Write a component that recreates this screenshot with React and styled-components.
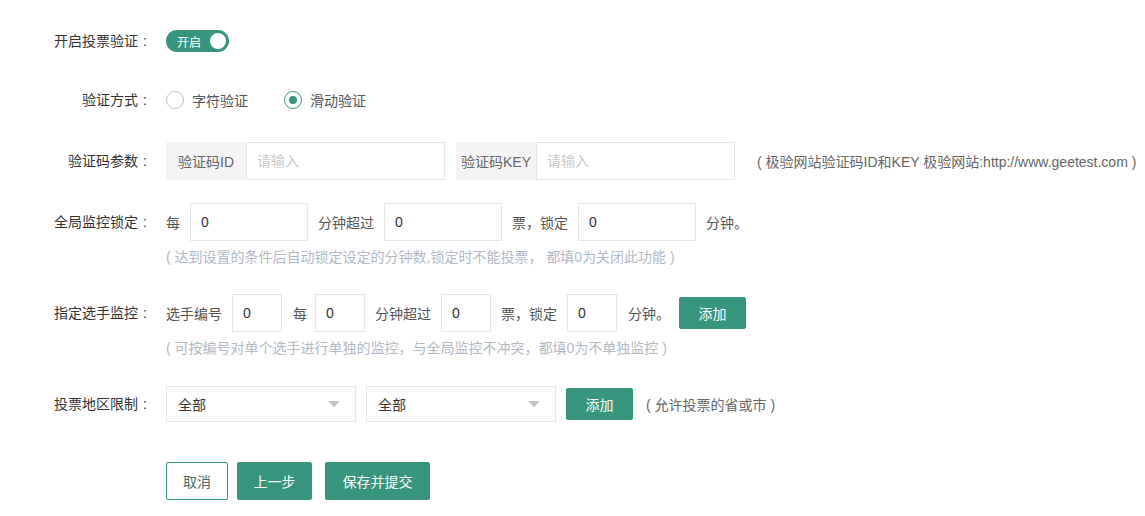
import React from 'react';
import styled, { createGlobalStyle } from 'styled-components';

const GREEN = '#36957c';

const Global = createGlobalStyle`
  html, body { margin: 0; padding: 0; background: #fff; }
  body {
    font-family: 'Liberation Sans', 'Noto Sans CJK SC', sans-serif;
    font-size: 14px;
    color: #333;
  }
  * { box-sizing: border-box; }
`;

const Page = styled.div`
  width: 1145px;
  padding-top: 22px;
`;

const Item = styled.div`
  display: flex;
  margin-bottom: ${p => p.$mb}px;
`;

const Label = styled.div`
  flex: 0 0 147px;
  height: 38px;
  line-height: 38px;
  text-align: right;
  color: #333;
  white-space: nowrap;
`;

const Colon = styled.span`
  padding-left: 5px;
`;

const Body = styled.div`
  margin-left: 19px;
  display: flex;
  flex-direction: column;
`;

const Line = styled.div`
  display: flex;
  align-items: center;
  height: 38px;
  white-space: nowrap;
`;

const Text = styled.span`
  color: #555;
  margin: 0 ${p => p.$mr ?? 10}px 0 ${p => p.$ml ?? 10}px;
`;

const Hint = styled.div`
  margin-top: 6px;
  line-height: 20px;
  color: #b2b9c5;
  white-space: nowrap;
`;

const SideHint = styled.span`
  color: #666;
  margin-left: ${p => p.$ml}px;
  white-space: nowrap;
`;

const Switch = styled.div`
  width: 63px;
  height: 22px;
  border-radius: 11px;
  background: ${GREEN};
  display: flex;
  align-items: center;
  justify-content: space-between;
  padding: 0 3px 0 11px;
  color: #fff;
  font-size: 12px;
`;

const Knob = styled.span`
  width: 16px;
  height: 16px;
  border-radius: 50%;
  background: #fff;
`;

const RadioWrap = styled.label`
  display: flex;
  align-items: center;
  margin-right: 36px;
  color: #555;
`;

const RadioCircle = styled.span`
  width: 18px;
  height: 18px;
  border-radius: 50%;
  border: 1px solid ${p => p.$on ? GREEN : '#c2c2c2'};
  display: flex;
  align-items: center;
  justify-content: center;
  margin-right: 8px;
  &::after {
    content: '';
    width: 8px;
    height: 8px;
    border-radius: 50%;
    background: ${p => p.$on ? GREEN : 'transparent'};
  }
`;

const Group = styled.div`
  display: flex;
  margin-right: ${p => p.$mr || 0}px;
`;

const Addon = styled.span`
  width: 80px;
  height: 38px;
  line-height: 38px;
  background: #f4f4f4;
  color: #666;
  text-align: center;
  border: 1px solid #f4f4f4;
`;

const Input = styled.input`
  width: ${p => p.$w}px;
  height: 38px;
  border: 1px solid #e6e6e6;
  padding: 0 10px;
  font-family: inherit;
  font-size: 14px;
  color: #333;
  outline: none;
  background: #fff;
  &::placeholder { color: #c8c8c8; }
`;

const Select = styled.div`
  width: 190px;
  height: 36px;
  border: 1px solid #e6e6e6;
  display: flex;
  align-items: center;
  justify-content: space-between;
  padding: 0 15px 0 11px;
  color: #333;
  margin-right: ${p => p.$mr || 0}px;
`;

const Caret = styled.span`
  width: 0;
  height: 0;
  border-left: 6px solid transparent;
  border-right: 6px solid transparent;
  border-top: 6px solid #c2c2c2;
`;

const Btn = styled.button`
  height: ${p => p.$h || 38}px;
  width: ${p => p.$w}px;
  padding: 0;
  border-radius: 2px;
  font-family: inherit;
  font-size: 14px;
  background: ${p => p.$plain ? '#fff' : GREEN};
  color: ${p => p.$plain ? '#48675f' : '#fff'};
  border: 1px solid ${GREEN};
  margin-right: ${p => p.$mr || 0}px;
  margin-left: ${p => p.$ml || 0}px;
  cursor: pointer;
`;

const Actions = styled.div`
  display: flex;
  margin-left: 166px;
`;

const L = ({ children }) => (
  <Label>{children}<Colon>:</Colon></Label>
);

export default function App() {
  return (
    <Page>
      <Global />
      <Item $mb={21}>
        <L>开启投票验证</L>
        <Body>
          <Line>
            <Switch>开启<Knob /></Switch>
          </Line>
        </Body>
      </Item>

      <Item $mb={23}>
        <L>验证方式</L>
        <Body>
          <Line>
            <RadioWrap><RadioCircle />字符验证</RadioWrap>
            <RadioWrap><RadioCircle $on />滑动验证</RadioWrap>
          </Line>
        </Body>
      </Item>

      <Item $mb={23}>
        <L>验证码参数</L>
        <Body>
          <Line>
            <Group $mr={11}>
              <Addon>验证码ID</Addon>
              <Input $w={199} placeholder="请输入" />
            </Group>
            <Group>
              <Addon>验证码KEY</Addon>
              <Input $w={199} placeholder="请输入" />
            </Group>
            <SideHint $ml={22}>( 极验网站验证码ID和KEY 极验网站:http://www.geetest.com )</SideHint>
          </Line>
        </Body>
      </Item>

      <Item $mb={27}>
        <L>全局监控锁定</L>
        <Body>
          <Line>
            <Text $ml={0} $mr={10}>每</Text>
            <Input $w={118} defaultValue="0" />
            <Text>分钟超过</Text>
            <Input $w={118} defaultValue="0" />
            <Text>票，锁定</Text>
            <Input $w={118} defaultValue="0" />
            <Text>分钟。</Text>
          </Line>
          <Hint>( 达到设置的条件后自动锁定设定的分钟数,锁定时不能投票， 都填0为关闭此功能 )</Hint>
        </Body>
      </Item>

      <Item $mb={27}>
        <L>指定选手监控</L>
        <Body>
          <Line>
            <Text $ml={0} $mr={10}>选手编号</Text>
            <Input $w={50} defaultValue="0" />
            <Text $ml={11} $mr={8}>每</Text>
            <Input $w={50} defaultValue="0" />
            <Text>分钟超过</Text>
            <Input $w={50} defaultValue="0" />
            <Text>票，锁定</Text>
            <Input $w={50} defaultValue="0" />
            <Text $ml={11} $mr={9}>分钟。</Text>
            <Btn $h={32} $w={67}>添加</Btn>
          </Line>
          <Hint>( 可按编号对单个选手进行单独的监控，与全局监控不冲突，都填0为不单独监控 )</Hint>
        </Body>
      </Item>

      <Item $mb={39}>
        <L>投票地区限制</L>
        <Body>
          <Line>
            <Select $mr={10}>全部<Caret /></Select>
            <Select $mr={10}>全部<Caret /></Select>
            <Btn $h={32} $w={67}>添加</Btn>
            <SideHint $ml={13}>( 允许投票的省或市 )</SideHint>
          </Line>
        </Body>
      </Item>

      <Actions>
        <Btn $plain $w={62} $mr={9}>取消</Btn>
        <Btn $w={75} $mr={13}>上一步</Btn>
        <Btn $w={105}>保存并提交</Btn>
      </Actions>
    </Page>
  );
}
